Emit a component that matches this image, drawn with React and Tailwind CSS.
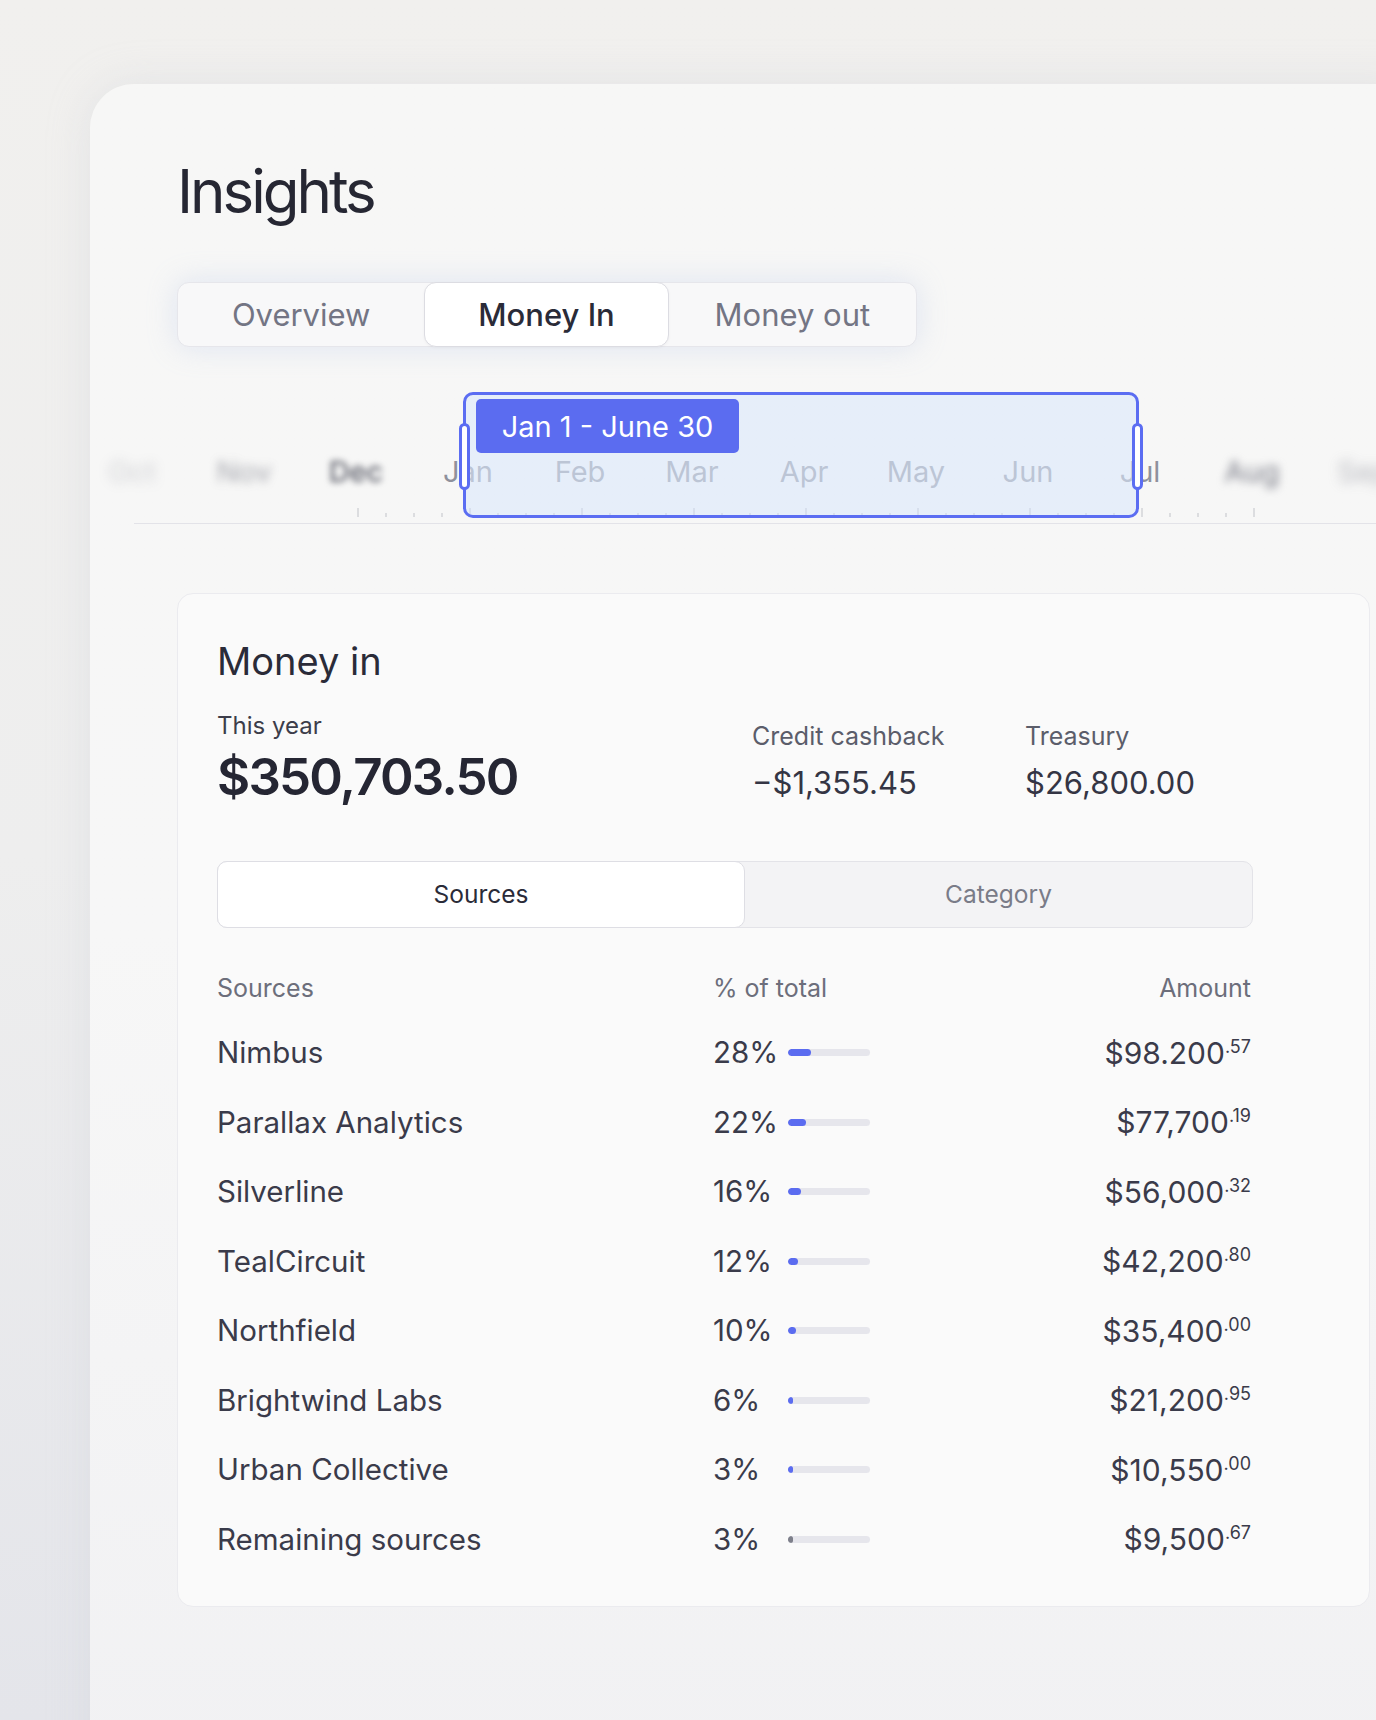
import React from "react";

const MONTHS = [
  { label: "Oct", cls: "text-[#8d8f99] blur-[6px] opacity-40" },
  { label: "Nov", cls: "text-[#80828d] blur-[5px] opacity-70" },
  { label: "Dec", cls: "text-[#5e606b] blur-[3px] font-medium" },
  { label: "Jan", cls: "text-[#8f919c]" },
  { label: "Feb", cls: "text-[#8f919c]" },
  { label: "Mar", cls: "text-[#8f919c]" },
  { label: "Apr", cls: "text-[#8f919c]" },
  { label: "May", cls: "text-[#8f919c]" },
  { label: "Jun", cls: "text-[#8f919c]" },
  { label: "Jul", cls: "text-[#8f919c]" },
  { label: "Aug", cls: "text-[#7a7c87] blur-[4px]" },
  { label: "Sep", cls: "text-[#8d8f99] blur-[6px] opacity-60" },
];

const SOURCES = [
  { name: "Nimbus", pct: 28, amount: "$98.200", cents: ".57" },
  { name: "Parallax Analytics", pct: 22, amount: "$77,700", cents: ".19" },
  { name: "Silverline", pct: 16, amount: "$56,000", cents: ".32" },
  { name: "TealCircuit", pct: 12, amount: "$42,200", cents: ".80" },
  { name: "Northfield", pct: 10, amount: "$35,400", cents: ".00" },
  { name: "Brightwind Labs", pct: 6, amount: "$21,200", cents: ".95" },
  { name: "Urban Collective", pct: 3, amount: "$10,550", cents: ".00" },
  { name: "Remaining sources", pct: 3, amount: "$9,500", cents: ".67", muted: true },
];

// ticks every 28px, a taller one under each month
const TICKS = Array.from({ length: 33 }, (_, i) => ({ x: 268 + i * 28, major: i % 4 === 0 }));

function Ticks() {
  return (
    <svg width="1320" height="37" className="block">
      {TICKS.map((t) => {
        const outside = t.x < 373 || t.x > 1049;
        return (
          <line
            key={t.x}
            x1={t.x}
            x2={t.x}
            y1={t.major ? 22 : 27}
            y2={31}
            stroke={outside ? "#b9bac3" : "#c4c5ce"}
            strokeOpacity={outside ? 0.6 : 1}
            strokeWidth="1.5"
          />
        );
      })}
    </svg>
  );
}

function Timeline() {
  return (
    <div className="relative -ml-[87px] mt-[45px] w-[1320px]">
      <div className="-ml-[14px] flex pt-[65px]">
        {MONTHS.map((m) => (
          <div key={m.label} className={`w-[112px] shrink-0 text-center text-[29px] leading-none ${m.cls}`}>
            {m.label}
          </div>
        ))}
      </div>
      <Ticks />
      <div className="ml-[44px] h-px bg-[#e3e3e8]" />

      {/* selected range */}
      <div className="absolute left-[373px] top-0 h-[126px] w-[676px] rounded-[10px] border-[3px] border-[#5b6df2] bg-[#dbe8fb]/60">
        <div className="ml-[10px] mt-[4px] flex h-[54px] w-[263px] items-center justify-center rounded-[5px] bg-[#5b6cf0] text-[29px] leading-none text-white">
          Jan 1 - June 30
        </div>
        <div className="absolute -left-[7px] top-[28px] h-[67px] w-[11px] rounded-full border-[3px] border-[#5b6df2] bg-white" />
        <div className="absolute -right-[7px] top-[28px] h-[67px] w-[11px] rounded-full border-[3px] border-[#5b6df2] bg-white" />
      </div>
    </div>
  );
}

function Amount({ value, cents }) {
  return (
    <div className="flex items-start justify-end text-[#3a3b4a]">
      <span className="text-[30px] leading-none">{value}</span>
      <span className="text-[18px] leading-none">{cents}</span>
    </div>
  );
}

export default function App() {
  return (
    <div className="relative h-[1720px] w-full overflow-hidden bg-gradient-to-b from-[#f1f0ee] via-[#eeeeee] to-[#e4e5ea] pl-[90px] pt-[84px] font-['Inter',sans-serif]">
      <div className="h-[1700px] w-[1320px] rounded-tl-[44px] bg-gradient-to-b from-[#f7f7f6] via-[#f7f7f7] to-[#f1f1f3] pl-[87px] pt-[77px] shadow-[0_0_40px_rgba(200,202,212,0.35)]">
        <h1 className="text-[60px] font-normal leading-none tracking-[-0.05em] text-[#262733]">Insights</h1>

        {/* main tabs */}
        <div className="mt-[61px] flex h-[65px] w-[740px] rounded-[12px] border border-[#e6e6eb] bg-[#f8f8f9] shadow-[0_0_30px_rgba(165,185,230,0.3)]">
          <div className="flex w-[247px] items-center justify-center text-[31px] leading-none text-[#737584]">Overview</div>
          <div className="-my-px flex w-[245px] items-center justify-center rounded-[12px] border border-[#dcdce2] bg-white text-[31px] font-medium leading-none text-[#2a2b38] shadow-[0_1px_3px_rgba(0,0,0,0.04)]">
            Money In
          </div>
          <div className="flex w-[248px] items-center justify-center text-[31px] leading-none text-[#737584]">Money out</div>
        </div>

        <Timeline />

        {/* money in card */}
        <div className="mt-[69px] h-[1014px] w-[1193px] rounded-[16px] border border-[#ebebef] bg-[#fafafa] pl-[39px] pt-[48px]">
          <h2 className="text-[38px] font-normal leading-none text-[#2a2b38]">Money in</h2>

          <div className="mt-[34px] flex">
            <div className="w-[535px]">
              <div className="text-[24px] leading-none text-[#3c3d4a]">This year</div>
              <div className="mt-[13px] text-[51px] font-semibold leading-none tracking-[-0.035em] text-[#252633]">$350,703.50</div>
            </div>
            <div className="w-[273px] pt-[10px]">
              <div className="text-[25px] leading-none text-[#5b5d6a]">Credit cashback</div>
              <div className="mt-[18px] text-[31px] leading-none text-[#343544]">−$1,355.45</div>
            </div>
            <div className="pt-[10px]">
              <div className="text-[25px] leading-none text-[#5b5d6a]">Treasury</div>
              <div className="mt-[18px] text-[31px] leading-none text-[#343544]">$26,800.00</div>
            </div>
          </div>

          {/* sources / category toggle */}
          <div className="mt-[59px] flex h-[67px] w-[1036px] rounded-[10px] border border-[#e3e3e8] bg-[#f3f3f5]">
            <div className="-my-px -ml-px flex w-[528px] items-center justify-center rounded-[10px] border border-[#dedee4] bg-white text-[24.5px] leading-none text-[#2a2b38]">
              Sources
            </div>
            <div className="flex flex-1 items-center justify-center text-[24.5px] leading-none text-[#7a7c88]">Category</div>
          </div>

          {/* table */}
          <div className="mt-[30px] w-[1034px]">
            <div className="flex h-[60px] items-center text-[25px] leading-none text-[#6c6e7b]">
              <div className="w-[496px]">Sources</div>
              <div className="flex-1">% of total</div>
              <div className="text-right">Amount</div>
            </div>
            {SOURCES.map((s) => (
              <div key={s.name} className="flex h-[69.5px] items-center text-[29.5px] leading-none text-[#3a3b4a]">
                <div className="w-[496px]">{s.name}</div>
                <div className="w-[75px]">{s.pct}%</div>
                <div className="h-[7px] w-[82px] overflow-hidden rounded-full bg-[#e6e6ec]">
                  <div
                    className={`h-full rounded-full ${s.muted ? "bg-[#7d7f8a]" : "bg-[#5b6cf0]"}`}
                    style={{ width: Math.max((82 * s.pct) / 100, 5) }}
                  />
                </div>
                <div className="flex-1">
                  <Amount value={s.amount} cents={s.cents} />
                </div>
              </div>
            ))}
          </div>
        </div>
      </div>
    </div>
  );
}
